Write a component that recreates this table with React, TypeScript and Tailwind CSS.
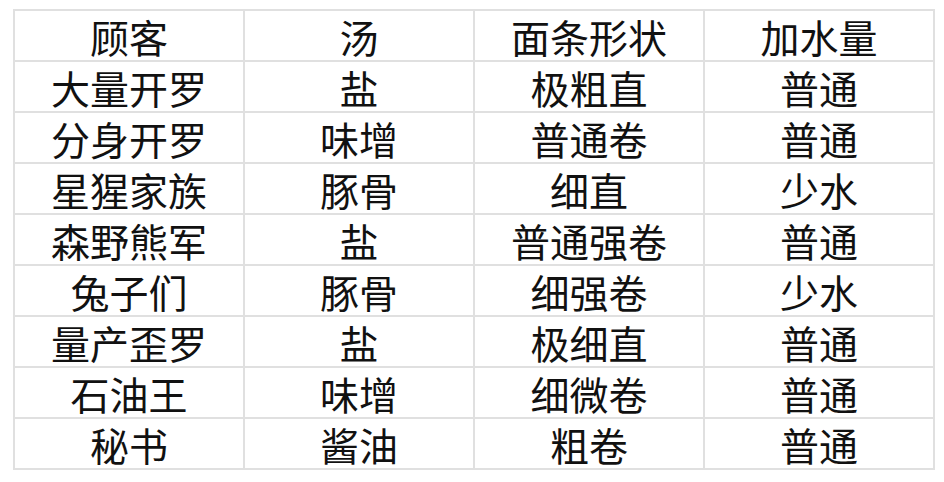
const header = ["顾客", "汤", "面条形状", "加水量"];

const rows = [
  ["大量开罗", "盐", "极粗直", "普通"],
  ["分身开罗", "味增", "普通卷", "普通"],
  ["星猩家族", "豚骨", "细直", "少水"],
  ["森野熊军", "盐", "普通强卷", "普通"],
  ["兔子们", "豚骨", "细强卷", "少水"],
  ["量产歪罗", "盐", "极细直", "普通"],
  ["石油王", "味增", "细微卷", "普通"],
  ["秘书", "酱油", "粗卷", "普通"],
];

export default function App() {
  const all = [header, ...rows];
  return (
    <div className="w-[944px] h-[482px] bg-white pt-[9px] pl-[13px]">
      <table
        className="border-collapse text-[#111] text-[39px] leading-none"
        style={{ fontFamily: '"Noto Sans CJK SC", "Noto Sans", sans-serif' }}
      >
        <tbody>
          {all.map((r, i) => (
            <tr key={i} className="h-[51px]">
              {r.map((c, j) => (
                <td
                  key={j}
                  className="w-[230px] border-2 border-[#e0e0e0] text-center align-middle p-0 pt-[2px]"
                >
                  {c}
                </td>
              ))}
            </tr>
          ))}
        </tbody>
      </table>
    </div>
  );
}
